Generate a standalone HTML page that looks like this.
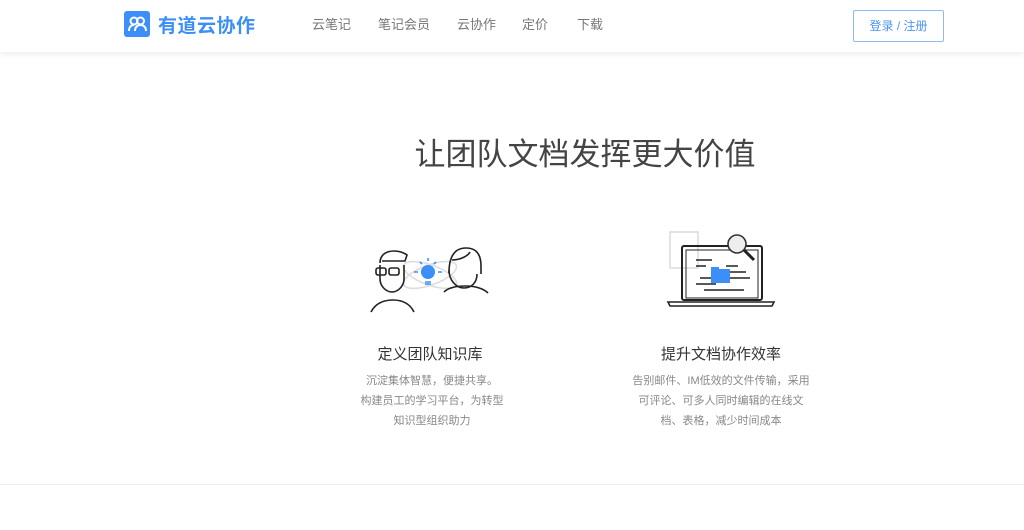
<!DOCTYPE html>
<html><head><meta charset="utf-8"><style>
*{margin:0;padding:0;box-sizing:border-box}
body{width:1024px;height:530px;background:#fff;font-family:"Liberation Sans","Noto Sans CJK SC",sans-serif;position:relative;overflow:hidden}
.hdr{position:absolute;left:0;top:0;width:1024px;height:52px;background:#fff;box-shadow:0 2px 6px rgba(0,0,0,.08);z-index:2}
.logo{position:absolute;left:124px;top:11px;width:26px;height:26px;background:#3b8ff7;border-radius:3px}
.brand{position:absolute;left:158px;top:11px;font-size:19px;color:#3b8ff7;font-weight:bold;letter-spacing:0.5px}
.nav{position:absolute;top:14px;font-size:13px;color:#777}
.btn{position:absolute;left:853px;top:10px;width:91px;height:32px;border:1px solid #8bbcf7;border-radius:2px;color:#4a95f0;font-size:12px;text-align:center;line-height:30px}
.title{position:absolute;left:0;width:1170px;text-align:center;top:129px;font-size:31px;color:#444}
.h{position:absolute;font-size:15px;color:#333;text-align:center;width:240px;top:343px}
.p{position:absolute;font-size:11px;color:#888;text-align:center;line-height:20px;top:371px}
.line{position:absolute;left:0;top:484px;width:1024px;height:1px;background:#eee}
</style></head><body>
<div class="hdr">
<div class="logo"><svg width="26" height="26" viewBox="0 0 26 26" fill="none" stroke="#fff" stroke-width="2"><circle cx="10" cy="10" r="3.5"/><circle cx="16.5" cy="10" r="3.5"/><path d="M5 20c0-4 2-6 5-6M11 20c0-4 2.5-6 5.5-6s5.5 2 5.5 6"/></svg></div>
<div class="brand">有道云协作</div>
<div class="nav" style="left:312px">云笔记</div>
<div class="nav" style="left:378px">笔记会员</div>
<div class="nav" style="left:457px">云协作</div>
<div class="nav" style="left:522px">定价</div>
<div class="nav" style="left:577px">下载</div>
<div class="btn">登录 / 注册</div>
</div>
<div class="title">让团队文档发挥更大价值</div>
<svg style="position:absolute;left:368px;top:230px" width="125" height="90" viewBox="0 0 125 90" fill="none" stroke="#222" stroke-width="1.6">
<ellipse cx="62" cy="45" rx="28" ry="10" stroke="#ddd" transform="rotate(-20 62 45)"/>
<ellipse cx="62" cy="45" rx="28" ry="10" stroke="#ddd" transform="rotate(20 62 45)"/>
<path d="M12 33c0-8 6-12 14-12s13 4 13 4l-2 6H14"/><path d="M12 35v14c0 7 6 13 12 13s12-6 12-13V35"/>
<rect x="8" y="38" width="10" height="7" rx="2"/><rect x="21" y="38" width="10" height="7" rx="2"/>
<path d="M3 82c4-8 12-12 22-12s17 4 21 12"/>
<path d="M81 43c0-20 8-25 17-25s15 5 15 18v8"/><path d="M81 40c0 10 7 18 15 18s13-6 13-14"/><path d="M84 30c8 0 16-4 18-8"/>
<path d="M76 62c4-4 12-6 22-6s18 3 22 7"/>
<circle cx="60" cy="42" r="7" fill="#3b8ff7" stroke="none"/><path d="M57 52h6M57 54h6" stroke="#3b8ff7"/>
<path d="M46 42h4M70 42h4M52 32l2 2M68 32l-2 2M60 28v3" stroke="#3b8ff7"/>
</svg>
<svg style="position:absolute;left:666px;top:228px" width="110" height="82" viewBox="0 0 110 82" fill="none" stroke="#222" stroke-width="1.6">
<rect x="4" y="4" width="28" height="36" stroke="#ddd"/>
<rect x="16" y="18" width="80" height="54" rx="2" stroke-width="2"/><rect x="20" y="22" width="72" height="48" stroke-width="1"/>
<path d="M2 74h106l-2 4H4z"/>
<circle cx="71" cy="16" r="9" fill="#eee" stroke="#333"/><path d="M78 22l10 10" stroke-width="3"/>
<path d="M30 32h16M30 38h10M60 38h12M64 44h16M34 50h50M30 56h20M38 62h40"/>
<rect x="45" y="41" width="19" height="14" fill="#3b8ff7" stroke="none"/><rect x="45" y="39" width="8" height="3" fill="#3b8ff7" stroke="none"/>
</svg>
<div class="h" style="left:310px">定义团队知识库</div>
<div class="p" style="left:337px;width:190px">沉淀集体智慧，便捷共享。<br>构建员工的学习平台，为转型<br>知识型组织助力</div>
<div class="h" style="left:601px">提升文档协作效率</div>
<div class="p" style="left:626px;width:190px">告别邮件、IM低效的文件传输，采用<br>可评论、可多人同时编辑的在线文<br>档、表格，减少时间成本</div>
<div class="line"></div>
</body></html>
